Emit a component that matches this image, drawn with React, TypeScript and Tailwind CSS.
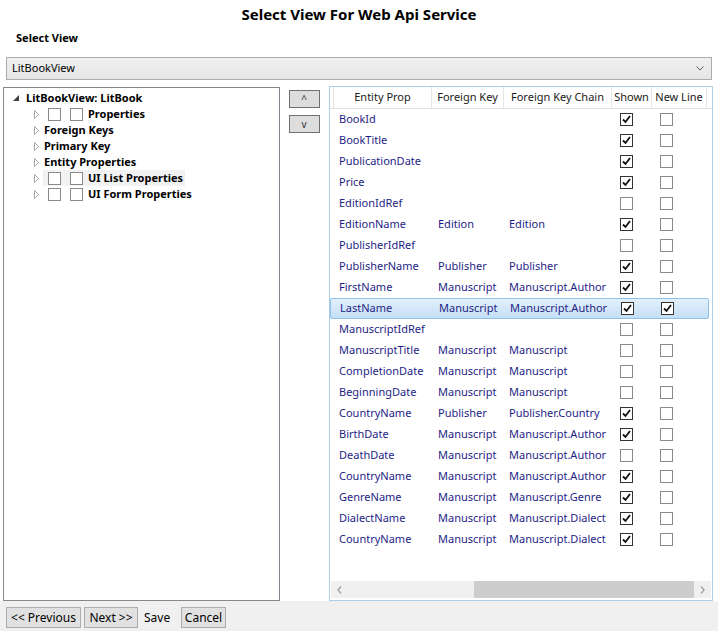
import React from 'react';

type Row = {
  prop: string;
  fk?: string;
  chain?: string;
  shown: boolean;
  newLine?: boolean;
  selected?: boolean;
};

const rows: Row[] = [
  { prop: 'BookId', shown: true },
  { prop: 'BookTitle', shown: true },
  { prop: 'PublicationDate', shown: true },
  { prop: 'Price', shown: true },
  { prop: 'EditionIdRef', shown: false },
  { prop: 'EditionName', fk: 'Edition', chain: 'Edition', shown: true },
  { prop: 'PublisherIdRef', shown: false },
  { prop: 'PublisherName', fk: 'Publisher', chain: 'Publisher', shown: true },
  { prop: 'FirstName', fk: 'Manuscript', chain: 'Manuscript.Author', shown: true },
  { prop: 'LastName', fk: 'Manuscript', chain: 'Manuscript.Author', shown: true, newLine: true, selected: true },
  { prop: 'ManuscriptIdRef', shown: false },
  { prop: 'ManuscriptTitle', fk: 'Manuscript', chain: 'Manuscript', shown: false },
  { prop: 'CompletionDate', fk: 'Manuscript', chain: 'Manuscript', shown: false },
  { prop: 'BeginningDate', fk: 'Manuscript', chain: 'Manuscript', shown: false },
  { prop: 'CountryName', fk: 'Publisher', chain: 'Publisher.Country', shown: true },
  { prop: 'BirthDate', fk: 'Manuscript', chain: 'Manuscript.Author', shown: true },
  { prop: 'DeathDate', fk: 'Manuscript', chain: 'Manuscript.Author', shown: false },
  { prop: 'CountryName', fk: 'Manuscript', chain: 'Manuscript.Author', shown: true },
  { prop: 'GenreName', fk: 'Manuscript', chain: 'Manuscript.Genre', shown: true },
  { prop: 'DialectName', fk: 'Manuscript', chain: 'Manuscript.Dialect', shown: true },
  { prop: 'CountryName', fk: 'Manuscript', chain: 'Manuscript.Dialect', shown: true },
];

const CheckBox: React.FC<{ checked?: boolean }> = ({ checked }) => (
  <span
    className={`inline-flex w-[13px] h-[13px] items-center justify-center bg-white border ${
      checked ? 'border-[#333333]' : 'border-[#8a8a8a]'
    }`}
  >
    {checked && (
      <svg width="9" height="9" viewBox="0 0 9 9">
        <path d="M1 4.5 L3.5 7 L8 1" fill="none" stroke="#111" strokeWidth="1.8" />
      </svg>
    )}
  </span>
);

const Arrow: React.FC<{ open?: boolean }> = ({ open }) =>
  open ? (
    <svg width="6" height="6" viewBox="0 0 6 6" className="shrink-0">
      <path d="M6 0 L6 6 L0 6 Z" fill="#404040" />
    </svg>
  ) : (
    <svg width="5" height="9" viewBox="0 0 5 9" className="shrink-0">
      <path d="M0.5 0.5 L4.5 4.5 L0.5 8.5 Z" fill="none" stroke="#a6a6a6" strokeWidth="1" />
    </svg>
  );

const TreeItem: React.FC<{ label: string; boxes?: boolean; hover?: boolean }> = ({ label, boxes, hover }) => (
  <div className="flex items-center h-4 pl-[30px]">
    <Arrow />
    <div className={`flex items-center h-4 ml-[4px] pl-[5px] pr-[2px] ${hover ? 'bg-[#f2f2f2]' : ''}`}>
      {boxes && (
        <>
          <CheckBox />
          <span className="w-[9px]" />
          <CheckBox />
          <span className="w-[5px]" />
        </>
      )}
      <span className={`font-bold ${boxes ? '' : '-ml-[4px]'}`}>{label}</span>
    </div>
  </div>
);

const App: React.FC = () => (
  <div className="w-[718px] h-[631px] bg-white flex flex-col font-['Noto_Sans',sans-serif] text-[11px] text-black overflow-hidden">
    <div className="text-center font-bold text-[15px] pt-[3px] h-[29px] leading-[22px]">
      Select View For Web Api Service
    </div>
    <div className="font-bold pl-4 h-[28px] leading-[18px]">Select View</div>

    <div className="mx-[6px] h-[23px] border border-[#acacac] bg-gradient-to-b from-[#f0f0f0] to-[#e5e5e5] flex items-center justify-between pl-[5px] pr-[7px]">
      <span>LitBookView</span>
      <svg width="8" height="5" viewBox="0 0 8 5">
        <path d="M0.5 0.5 L4 4 L7.5 0.5" fill="none" stroke="#606060" strokeWidth="1" />
      </svg>
    </div>

    <div className="flex flex-1 min-h-0 mt-[6px]">
      <div className="ml-[3px] w-[277px] mt-[1px] border border-[#828790] flex flex-col pt-[2px]">
        <div className="flex items-center h-4 pl-[9px]">
          <Arrow open />
          <span className="font-bold ml-[7px]">LitBookView: LitBook</span>
        </div>
        <TreeItem label="Properties" boxes />
        <TreeItem label="Foreign Keys" />
        <TreeItem label="Primary Key" />
        <TreeItem label="Entity Properties" />
        <TreeItem label="UI List Properties" boxes hover />
        <TreeItem label="UI Form Properties" boxes />
      </div>

      <div className="w-[49px] flex flex-col items-center pt-[4px] gap-[7px] pr-[6px] pl-[5px]">
        <button className="w-[31px] h-[18px] border border-[#707070] bg-[#dddddd] text-[10px] leading-none text-[#333]">
          ^
        </button>
        <button className="w-[31px] h-[18px] border border-[#707070] bg-[#dddddd] text-[10px] leading-none text-[#333]">
          v
        </button>
      </div>

      <div className="w-[384px] border border-[#abcfe8] flex flex-col">
        <div className="grid grid-cols-[4px_98px_72px_108px_40px_55px] h-[22px] border-b border-[#e0e0e0] text-[#1a1a1a]">
          <div className="border-r border-[#e5e5e5]" />
          <div className="border-r border-[#e5e5e5] flex items-center justify-center">Entity Prop</div>
          <div className="border-r border-[#e5e5e5] flex items-center justify-center">Foreign Key</div>
          <div className="border-r border-[#e5e5e5] flex items-center justify-center">Foreign Key Chain</div>
          <div className="border-r border-[#e5e5e5] flex items-center justify-center">Shown</div>
          <div className="border-r border-[#e5e5e5] flex items-center justify-center">New Line</div>
        </div>

        <div className="flex-1 min-h-0 text-[#1e1e86]">
          {rows.map((r, i) => (
            <div
              key={i}
              className={`grid grid-cols-[4px_98px_72px_108px_40px_55px] h-[21px] items-center ${
                r.selected
                  ? 'bg-gradient-to-b from-[#e3f0fc] to-[#c4dff5] border border-[#8fc1ea] rounded-[2px] w-[379px]'
                  : ''
              }`}
            >
              <div />
              <div className="pl-[5px] truncate">{r.prop}</div>
              <div className="pl-[6px]">{r.fk}</div>
              <div className="pl-[5px]">{r.chain}</div>
              <div className="pl-[8px] flex items-center">
                <CheckBox checked={r.shown} />
              </div>
              <div className="pl-[8px] flex items-center">
                <CheckBox checked={r.newLine} />
              </div>
            </div>
          ))}
        </div>

        <div className="h-[17px] mb-[2px] mx-[1px] bg-[#f0f0f0] flex items-stretch">
          <div className="w-[17px] flex items-center justify-center">
            <svg width="5" height="8" viewBox="0 0 5 8">
              <path d="M4 0.5 L1 4 L4 7.5" fill="none" stroke="#a0a0a0" strokeWidth="1.3" />
            </svg>
          </div>
          <div className="w-[126px]" />
          <div className="flex-1 bg-[#cdcdcd]" />
          <div className="w-[17px] flex items-center justify-center">
            <svg width="5" height="8" viewBox="0 0 5 8">
              <path d="M1 0.5 L4 4 L1 7.5" fill="none" stroke="#a0a0a0" strokeWidth="1.3" />
            </svg>
          </div>
        </div>
      </div>
    </div>

    <div className="h-[30px] bg-[#f0f0f0] flex items-center pl-[6px] pt-[6px] pb-[3px] gap-[3px] text-[12px]">
      <button className="h-[21px] w-[75px] border border-[#adadad] bg-[#e1e1e1] leading-none">&lt;&lt; Previous</button>
      <button className="h-[21px] w-[54px] border border-[#adadad] bg-[#e1e1e1] leading-none">Next &gt;&gt;</button>
      <span className="ml-[3px] w-[34px]">Save</span>
      <button className="h-[21px] w-[45px] border border-[#adadad] bg-[#e1e1e1] leading-none">Cancel</button>
    </div>
  </div>
);

export default App;
